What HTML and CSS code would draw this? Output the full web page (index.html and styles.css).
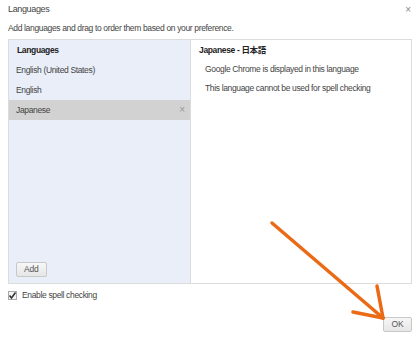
FILE: index.html
```html
<!DOCTYPE html>
<html>
<head>
<meta charset="utf-8">
<link rel="stylesheet" href="styles.css">
</head>
<body>
<div class="dialog">
  <div class="titlebar">
    <span class="title">Languages</span>
    <span class="close">×</span>
  </div>
  <div class="subtitle">Add languages and drag to order them based on your preference.</div>
  <div class="panel">
    <div class="list">
      <div class="list-head">Languages</div>
      <div class="item">English (United States)</div>
      <div class="item">English</div>
      <div class="item selected"><span>Japanese</span><span class="remove">×</span></div>
      <div class="list-foot"><button class="btn">Add</button></div>
    </div>
    <div class="detail">
      <div class="detail-head">Japanese - 日本語</div>
      <div class="detail-line">Google Chrome is displayed in this language</div>
      <div class="detail-line">This language cannot be used for spell checking</div>
    </div>
  </div>
  <div class="check-row">
    <span class="checkbox"><svg width="9" height="9" viewBox="0 0 9 9"><path d="M1.5 4.5 L3.5 7 L7.5 1.5" fill="none" stroke="#333" stroke-width="1.6"/></svg></span>
    <span>Enable spell checking</span>
  </div>
  <div class="footer"><button class="btn ok">OK</button></div>
  <svg class="arrow" width="420" height="338" viewBox="0 0 420 338">
    <g stroke="#ea6a16" stroke-width="3.5" stroke-linecap="round" fill="none">
      <line x1="272" y1="223" x2="383" y2="318"/>
      <line x1="377" y1="286" x2="383" y2="318"/>
      <line x1="353" y1="312" x2="383" y2="318"/>
    </g>
  </svg>
</div>
</body>
</html>
```
FILE: styles.css
```css
* { box-sizing: border-box; }
html, body { margin: 0; padding: 0; background: #fff; }
body {
  font-family: "Liberation Sans", Arial, "Noto Sans CJK JP", sans-serif;
  font-size: 8.5px;
  letter-spacing: -0.35px;
  color: #333;
  width: 420px;
  height: 338px;
  overflow: hidden;
}
.dialog { position: relative; width: 420px; height: 338px; padding: 0 8px; }
.titlebar {
  display: flex;
  justify-content: space-between;
  align-items: center;
  height: 17px;
  padding-top: 1px;
}
.title { font-size: 9px; color: #444; }
.close { font-size: 10px; color: #888; margin-right: 1px; letter-spacing: 0; }
.subtitle { margin-top: 4px; height: 14px; line-height: 14px; color: #444; }
.panel {
  margin-top: 4px;
  height: 245px;
  border: 1px solid #dcdcdc;
  display: grid;
  grid-template-columns: 182px 1fr;
}
.list {
  background: #e9eef9;
  border-right: 1px solid #dcdcdc;
  display: flex;
  flex-direction: column;
}
.list-head {
  height: 20px;
  line-height: 20px;
  padding-left: 8px;
  font-weight: bold;
  color: #222;
}
.item {
  height: 20px;
  line-height: 20px;
  padding-left: 7px;
  padding-right: 5px;
  display: flex;
  justify-content: space-between;
  color: #444;
}
.item.selected { background: #d2d2d2; }
.remove { color: #999; font-size: 10px; letter-spacing: 0; }
.list-foot { margin-top: auto; padding: 0 0 6px 7px; }
.btn {
  font-family: inherit;
  font-size: 8.5px;
  letter-spacing: -0.2px;
  color: #555;
  height: 15px;
  padding: 0 7px;
  border: 1px solid #c8c8c8;
  border-radius: 2px;
  background: linear-gradient(#f7f7f7, #e6e6e6);
  line-height: 13px;
}
.detail { padding: 0 8px; }
.detail-head {
  height: 20px;
  line-height: 20px;
  font-weight: bold;
  color: #222;
}
.detail-line {
  padding-left: 6px;
  height: 19px;
  line-height: 19px;
  color: #444;
}
.check-row {
  display: flex;
  align-items: center;
  gap: 5px;
  height: 22px;
  color: #444;
}
.checkbox {
  width: 9px;
  height: 9px;
  border: 1px solid #aaa;
  background: #f4f4f4;
  display: flex;
}
.checkbox svg { margin: -1px; }
.footer {
  display: flex;
  justify-content: flex-end;
  margin-top: 11px;
}
.ok { width: 29px; height: 15px; padding: 0; }
.arrow { position: absolute; left: 0; top: 0; pointer-events: none; }
```
